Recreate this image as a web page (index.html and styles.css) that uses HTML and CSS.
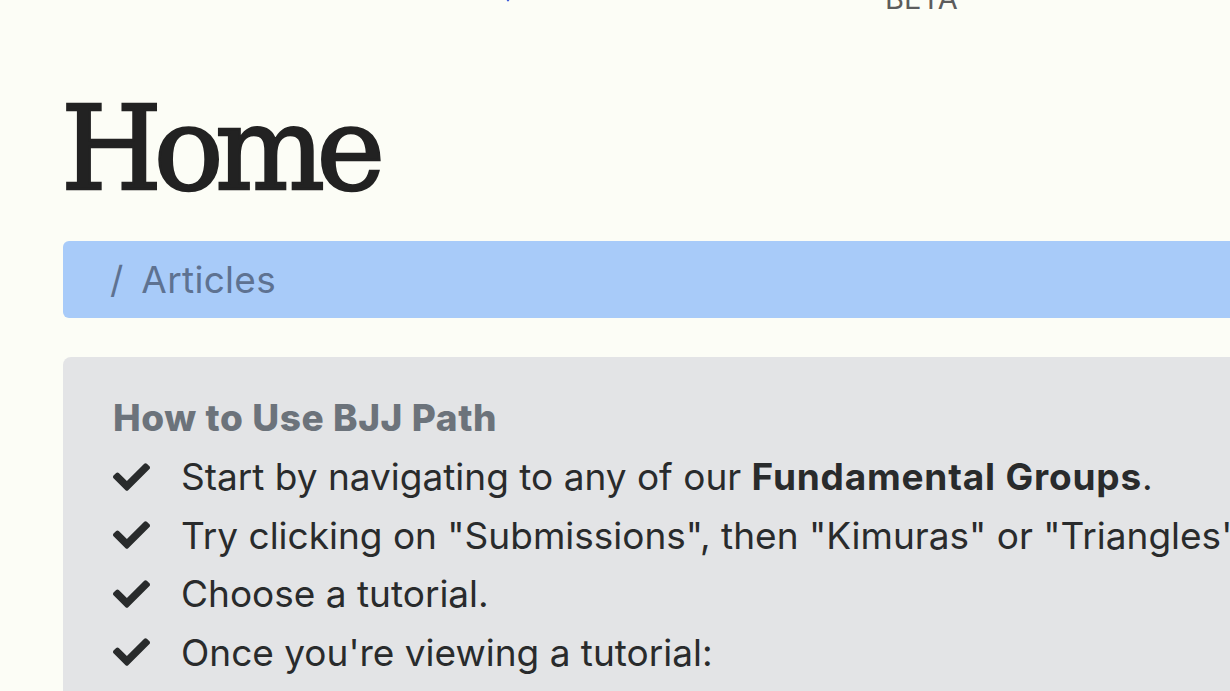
FILE: index.html
```html
<!DOCTYPE html>
<html lang="en">
<head>
    <meta charset="UTF-8">
    <meta name="viewport" content="width=device-width, initial-scale=1.0">
    <title>BJJ Path</title>
    <link rel="stylesheet" href="styles.css">
</head>
<body>

    <div class="topbar">
        <div class="brand">
            <svg class="brand-mark" width="40" height="30" viewBox="0 0 40 30">
                <path d="M4 4 L20 24 L36 4" fill="none" stroke="#2f4fd6" stroke-width="6" stroke-linecap="round"/>
            </svg>
        </div>
        <div class="beta">BETA</div>
    </div>

    <div class="page">
        <h1 class="title">Home</h1>

        <div class="crumbs">
            <span class="crumb-sep">/</span>
            <span class="crumb">Articles</span>
        </div>

        <div class="howto">
            <h5 class="howto-title">How to Use BJJ Path</h5>
            <ul class="checklist">
                <li>
                    <svg class="check" viewBox="0 66 512 380"><path d="M173.898 439.404l-166.4-166.4c-9.997-9.997-9.997-26.206 0-36.204l36.203-36.204c9.997-9.998 26.207-9.998 36.204 0L192 312.69 432.095 72.596c9.997-9.997 26.207-9.997 36.204 0l36.203 36.204c9.997 9.997 9.997 26.206 0 36.204l-294.4 294.401c-9.998 9.997-26.207 9.997-36.204-.001z"/></svg>
                    <span>Start by navigating to any of our <b>Fundamental Groups</b>.</span>
                </li>
                <li>
                    <svg class="check" viewBox="0 66 512 380"><path d="M173.898 439.404l-166.4-166.4c-9.997-9.997-9.997-26.206 0-36.204l36.203-36.204c9.997-9.998 26.207-9.998 36.204 0L192 312.69 432.095 72.596c9.997-9.997 26.207-9.997 36.204 0l36.203 36.204c9.997 9.997 9.997 26.206 0 36.204l-294.4 294.401c-9.998 9.997-26.207 9.997-36.204-.001z"/></svg>
                    <span>Try clicking on "Submissions", then "Kimuras" or "Triangles".</span>
                </li>
                <li>
                    <svg class="check" viewBox="0 66 512 380"><path d="M173.898 439.404l-166.4-166.4c-9.997-9.997-9.997-26.206 0-36.204l36.203-36.204c9.997-9.998 26.207-9.998 36.204 0L192 312.69 432.095 72.596c9.997-9.997 26.207-9.997 36.204 0l36.203 36.204c9.997 9.997 9.997 26.206 0 36.204l-294.4 294.401c-9.998 9.997-26.207 9.997-36.204-.001z"/></svg>
                    <span>Choose a tutorial.</span>
                </li>
                <li>
                    <svg class="check" viewBox="0 66 512 380"><path d="M173.898 439.404l-166.4-166.4c-9.997-9.997-9.997-26.206 0-36.204l36.203-36.204c9.997-9.998 26.207-9.998 36.204 0L192 312.69 432.095 72.596c9.997-9.997 26.207-9.997 36.204 0l36.203 36.204c9.997 9.997 9.997 26.206 0 36.204l-294.4 294.401c-9.998 9.997-26.207 9.997-36.204-.001z"/></svg>
                    <span>Once you're viewing a tutorial:</span>
                </li>
            </ul>
        </div>
    </div>

</body>
</html>
```

FILE: styles.css
```css
body {
    margin: 0;
    background-color: #fcfdf6; /* cream page */
    color: #292b2c;
    font-family: Inter, Roboto, "Liberation Sans", sans-serif;
    font-size: 37px;
    line-height: 1.5;
    overflow: hidden;
}

.topbar {
    display: flex;
    align-items: flex-end;
    height: 13px;
    overflow: hidden;
}

.brand {
    display: flex;
    align-items: flex-end;
    padding-left: 488px;
    width: 397px;
}

.brand-mark {
    display: block;
    margin-bottom: 10px;
}

.beta {
    font-size: 29px;
    line-height: 1;
    color: #5c5c5c;
}

.page {
    padding: 0 0 0 63px;
}

.title {
    font-family: "DejaVu Serif", "Liberation Serif", serif;
    font-weight: normal;
    font-size: 116px;
    line-height: 1;
    color: #222;
    -webkit-text-stroke: 2.5px #222;
    margin: 78px 0 0 -2px;
    letter-spacing: -8.5px;
}

.crumbs {
    display: flex;
    gap: 18px;
    align-items: center;
    margin-top: 34px;
    height: 77px;
    padding-left: 47px;
    border-radius: 6px 0 0 6px;
    background-color: #a8cbf9;
    color: #5e7291;
}

.crumb {
    letter-spacing: 0.3px;
}

.howto {
    margin-top: 39px;
    padding: 33px 0 0 50px;
    background-color: #e3e4e6;
    border-radius: 8px 0 0 0;
    height: 400px;
}

.howto-title {
    margin: 0 0 2px 0;
    font-size: 37px;
    font-weight: 800;
    letter-spacing: 0.6px;
    color: #6c737b;
    line-height: 1.5;
}

.checklist {
    list-style: none;
    margin: 0;
    padding: 0;
}

.checklist li {
    display: flex;
    align-items: center;
    gap: 31px;
    height: 58.5px;
    white-space: nowrap;
}

.checklist b {
    font-weight: bold;
    letter-spacing: 0.8px;
}

.check {
    width: 37px;
    height: 28px;
    flex: none;
    fill: #292b2c;
}
```
